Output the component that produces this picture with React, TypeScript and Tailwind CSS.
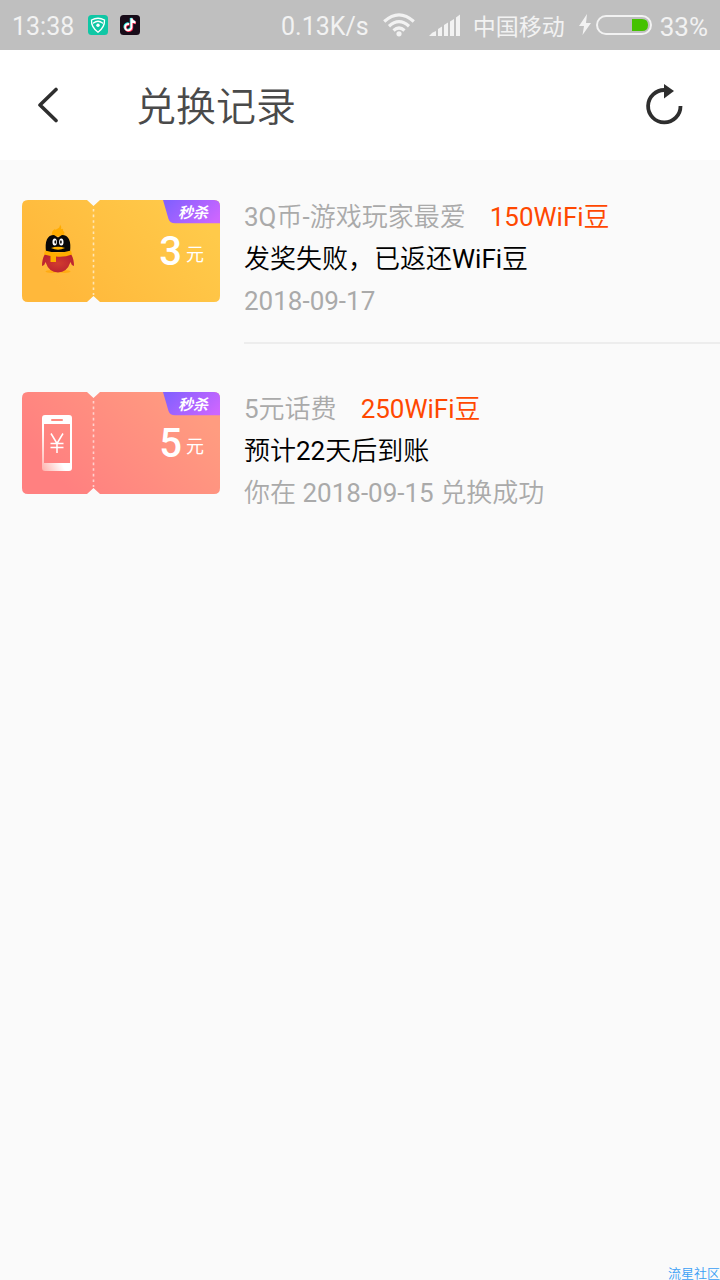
import type { ReactNode } from "react";

type CouponProps = {
  id: string;
  from: string;
  to: string;
  value: string;
  children: ReactNode;
};

function Coupon({ id, from, to, value, children }: CouponProps) {
  return (
    <div className="relative mt-[5px] h-[102px] w-[198px] shrink-0 text-white">
      <svg viewBox="0 0 198 102" className="absolute inset-0 size-full" aria-hidden="true">
        <defs>
          <linearGradient id={`${id}-bg`} gradientUnits="userSpaceOnUse" x1="50" y1="102" x2="160" y2="0">
            <stop offset="0" stopColor={from} />
            <stop offset="1" stopColor={to} />
          </linearGradient>
          <linearGradient id={`${id}-tag`} x1="0" y1="0.3" x2="1" y2="0.7">
            <stop offset="0" stopColor="#8460ff" />
            <stop offset="1" stopColor="#cc66ff" />
          </linearGradient>
        </defs>
        <path
          d="M6 0H65L71.5 6L78 0H192Q198 0 198 6V96Q198 102 192 102H78L71.5 96L65 102H6Q0 102 0 96V6Q0 0 6 0Z"
          fill={`url(#${id}-bg)`}
        />
        <path d="M71.5 9V95" stroke="#fff" strokeOpacity="0.6" strokeWidth="1.6" strokeDasharray="2.6 3" />
        <path d="M141 0H192Q198 0 198 6V23.3H153Q148 23.3 146.500 19Z" fill={`url(#${id}-tag)`} />
      </svg>
      <div className="relative flex h-full">
        <div className="flex w-[72px] shrink-0 items-center justify-center">{children}</div>
        <div className="flex flex-1 flex-col items-end">
          <span className="h-6 pr-3 font-['Noto_Sans_CJK_SC',sans-serif] text-[15px] leading-6 font-bold italic">秒杀</span>
          <p className="flex items-center gap-1 pr-4 leading-[54px]">
            <span className="text-[40px] font-medium">{value}</span>
            <span className="pt-[2px] font-['Noto_Sans_CJK_SC',sans-serif] text-[18px]">元</span>
          </p>
        </div>
      </div>
    </div>
  );
}

function Penguin() {
  return (
    <svg viewBox="0 0 34 50" className="mr-[1px] mb-[6px] h-[50px] w-[34px]" aria-hidden="true">
      <defs>
        <radialGradient id="body" cx="0.5" cy="0.5" r="0.6">
          <stop offset="0" stopColor="#d23c2f" />
          <stop offset="1" stopColor="#b71f30" />
        </radialGradient>
      </defs>
      <path d="M11 13Q10 8 14 6Q14 7.500 16 6Q19 5 19 1.500Q21 4 20 6Q23 5 22 8Q25 9 22 13Z" fill="#ffab00" />
      <ellipse cx="10.500" cy="48.500" rx="6" ry="1.500" fill="#ffab13" />
      <ellipse cx="23.500" cy="48.500" rx="6" ry="1.500" fill="#ffab13" />
      <path
        d="M4 31H30Q33 36 33 43Q30 42 29.500 39Q26 49.500 17 49.500Q8 49.500 4.500 39Q4 42 1 43Q1 36 4 31Z"
        fill="url(#body)"
      />
      <path d="M5 29Q3 12 13 12L17 14.500L21 12Q31 12 29 29Z" fill="#080808" />
      <path d="M4 27.500Q17 31.500 30 27.500L31 31.500Q23 34.500 15 33.500V39H9.500V33L3 31.500Z" fill="#ffae00" />
      <ellipse cx="13.700" cy="19" rx="2.200" ry="3.600" fill="#fff" />
      <ellipse cx="20.300" cy="19" rx="2.200" ry="3.600" fill="#fff" />
      <ellipse cx="14.300" cy="19" rx="0.900" ry="1.700" fill="#111" />
      <ellipse cx="19.900" cy="19" rx="0.900" ry="1.700" fill="#111" />
      <path d="M10 25Q17 22.500 24 25Q17 28.500 10 25Z" fill="#ffb300" />
    </svg>
  );
}

function Phone() {
  return (
    <svg viewBox="0 0 30 56" className="mr-[2px] h-[56px] w-[30px]" aria-hidden="true">
      <defs>
        <linearGradient id="phone" x1="1" y1="0" x2="0" y2="1">
          <stop offset="0.6" stopColor="#fff" />
          <stop offset="1" stopColor="#ffb0aa" />
        </linearGradient>
      </defs>
      <path
        d="M3 0H27Q30 0 30 3V53Q30 56 27 56H3Q0 56 0 53V3Q0 0 3 0ZM2 9V48H28V9Z"
        fill="url(#phone)"
        fillRule="evenodd"
      />
      <path d="M10 5H20" stroke="#ff8a80" strokeWidth="2" strokeLinecap="round" />
      <path d="M9 18.500L15 28.500L21 18.500M15 28.500V38M8.500 28.500H21.500M8.500 32.500H21.500" stroke="#fff" strokeWidth="1.500" fill="none" />
    </svg>
  );
}

function StatusBar() {
  return (
    <div className="flex h-[50px] items-center bg-[#bfbfbf] px-3 text-[25px] leading-[50px] text-[#f2f2f2]">
      <span className="pt-[3px]">13:38</span>
      <svg viewBox="0 0 20 20" className="ml-[14px] size-5" aria-hidden="true">
        <rect width="20" height="20" rx="3.500" fill="#0fc7a5" />
        <g fill="none" stroke="#fff" strokeWidth="1.300" strokeLinecap="round">
          <path d="M3.500 5Q10 1.500 16.500 5Q17 12 10 17.200Q3 12 3.500 5Z" />
          <path d="M5.500 8Q10 4.500 14.500 8" />
        </g>
        <circle cx="10" cy="10.300" r="1.700" fill="#fff" />
      </svg>
      <svg viewBox="0 0 20 20" className="ml-3 size-5" aria-hidden="true">
        <rect width="20" height="20" rx="3.500" fill="#170b18" />
        <g fill="none" strokeWidth="2.400">
          <path d="M8.600 8.600A3.200 3.200 0 1 0 11 12.200V3Q11.500 6.500 15 7" stroke="#25f4ee" />
          <path d="M9.600 9.600A3.200 3.200 0 1 0 12 13.200V4Q12.500 7.500 16 8" stroke="#fe2c55" />
          <path d="M9.100 9.100A3.200 3.200 0 1 0 11.500 12.700V3.500Q12 7 15.500 7.500" stroke="#fff" strokeWidth="1.800" />
        </g>
      </svg>
      <span className="ml-auto pt-[3px]">0.13K/s</span>
      <svg viewBox="0 0 32 24" className="ml-[14px] h-6 w-8" aria-hidden="true">
        <g fill="none" stroke="#f2f2f2" strokeWidth="3.200">
          <path d="M1.200 8.500Q16 -4.800 30.800 8.500" />
          <path d="M6 13.200Q16 4.200 26 13.200" />
          <path d="M10.500 17.500Q16 12.500 21.500 17.500" />
        </g>
        <circle cx="16" cy="20.800" r="2.600" fill="#f2f2f2" />
      </svg>
      <svg viewBox="0 0 32 22" className="ml-[14px] h-[22px] w-8" aria-hidden="true">
        <path
          d="M0 22Q3 18 7 17V22ZM9 22V15L13 12.500V22ZM15 22V11L19 8.500V22ZM21 22V7.500L25 5V22ZM27 22V3.500L31 0.500V22Z"
          fill="#f2f2f2"
        />
      </svg>
      <span className="ml-3 font-['Noto_Sans_CJK_SC',sans-serif] text-[23px]">中国移动</span>
      <svg viewBox="0 0 12 22" className="ml-[14px] h-[22px] w-3" aria-hidden="true">
        <path d="M8 0L0 12H5L3.500 21L12 9H7Z" fill="#f2f2f2" />
      </svg>
      <svg viewBox="0 0 56 20" className="ml-[5px] h-5 w-14" aria-hidden="true">
        <rect x="1" y="1" width="54" height="18" rx="9" fill="none" stroke="#f2f2f2" strokeWidth="2" />
        <path d="M36 4H46Q52 4 52 10T46 16H36Z" fill="#45c200" />
      </svg>
      <span className="ml-2 pt-[3px] text-[26px]">33%</span>
    </div>
  );
}

type RecordProps = {
  coupon: ReactNode;
  name: string;
  price: string;
  status: string;
  date: string;
  divided?: boolean;
};

function RecordRow({ coupon, name, price, status, date, divided }: RecordProps) {
  return (
    <li className="flex gap-6 pl-[22px]">
      {coupon}
      <div className={divided ? "mb-[43px] flex-1 border-b-2 border-[#ededed] pt-px pb-5" : "flex-1 pt-px"}>
        <p className="flex gap-6 text-[#aaa]">
          <span>{name}</span>
          <span className="text-[#ff4800]">{price}</span>
        </p>
        <p className="text-black">{status}</p>
        <p className="text-[#aaa]">{date}</p>
      </div>
    </li>
  );
}

export default function App() {
  return (
    <div className="flex min-h-screen flex-col bg-[#fafafa] font-['Roboto','Noto_Sans_CJK_SC_DemiLight','Noto_Sans_CJK_SC',sans-serif]">
      <StatusBar />
      <header className="flex h-[110px] items-center bg-white px-9 text-[#4a4a4a]">
        <button type="button" aria-label="返回" className="flex size-6 items-center">
          <svg viewBox="0 0 24 36" className="h-9 w-6 shrink-0" fill="none" stroke="#2e2e2e" strokeWidth="3.600" strokeLinecap="round" strokeLinejoin="round">
            <path d="M20 2.500L4 18L20 33.500" />
          </svg>
        </button>
        <h1 className="ml-[76px] pt-[6px] text-[40px] leading-[60px]">兑换记录</h1>
        <button type="button" aria-label="刷新" className="ml-auto">
          <svg viewBox="0 0 38 42" className="block h-[42px] w-[38px]" aria-hidden="true">
            <path d="M19 6A16.200 16.200 0 1 0 34.500 22" fill="none" stroke="#2e2e2e" strokeWidth="3.800" />
            <path d="M18 0L28 7L18 14.500Z" fill="#2e2e2e" />
          </svg>
        </button>
      </header>
      <main>
        <ul className="pt-[35px] text-[26px] leading-[42px]">
          <RecordRow
            coupon={
              <Coupon id="coin" from="#ffb83b" to="#ffca4a" value="3">
                <Penguin />
              </Coupon>
            }
            name="3Q币-游戏玩家最爱"
            price="150WiFi豆"
            status="发奖失败，已返还WiFi豆"
            date="2018-09-17"
            divided
          />
          <RecordRow
            coupon={
              <Coupon id="phone-bill" from="#ff8080" to="#ff9c80" value="5">
                <Phone />
              </Coupon>
            }
            name="5元话费"
            price="250WiFi豆"
            status="预计22天后到账"
            date="你在 2018-09-15 兑换成功"
          />
        </ul>
      </main>
      <footer className="mt-auto text-right text-[13px] leading-3 text-[#3a9ff5]">流星社区</footer>
    </div>
  );
}
